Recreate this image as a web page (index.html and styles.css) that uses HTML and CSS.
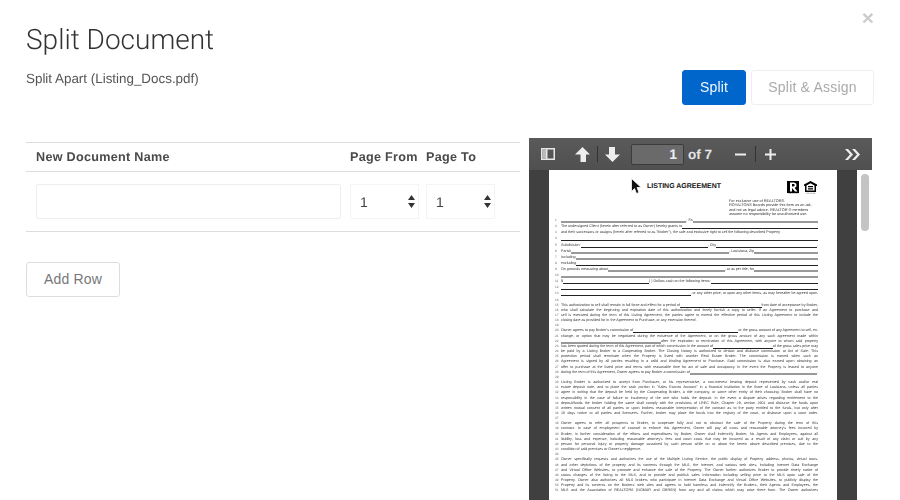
FILE: index.html
```html
<!DOCTYPE html>
<html lang="en">
<head>
<meta charset="utf-8">
<title>Split Document</title>
<link rel="stylesheet" href="styles.css">
</head>
<body>
<main class="modal">
  <button class="close" type="button">×</button>
  <header class="top">
    <div class="heading">
      <h1>Split Document</h1>
      <p>Split Apart (Listing_Docs.pdf)</p>
    </div>
    <div class="actions">
      <button class="btn primary" type="button">Split</button>
      <button class="btn ghost" type="button">Split &amp; Assign</button>
    </div>
  </header>
  <section class="content">
    <div class="form">
      <table class="rows">
        <thead>
          <tr><th class="c-name">New Document Name</th><th class="c-num">Page From</th><th class="c-to">Page To</th></tr>
        </thead>
        <tbody>
          <tr>
            <td class="c-name"><div class="input"></div></td>
            <td class="c-num"><div class="select">1<svg class="updown" viewBox="0 0 7 13" width="7" height="13"><path d="M3.5 0L7 5H0zM3.5 13L0 8h7z"/></svg></div></td>
            <td class="c-to"><div class="select">1<svg class="updown" viewBox="0 0 7 13" width="7" height="13"><path d="M3.5 0L7 5H0zM3.5 13L0 8h7z"/></svg></div></td>
          </tr>
        </tbody>
      </table>
      <button class="btn add" type="button">Add Row</button>
    </div>
    <div class="viewer">
      <div class="toolbar">
        <svg class="tool t-side" viewBox="0 0 14 12" width="14" height="12"><path fill="#e8e8e8" fill-rule="evenodd" d="M0 0h14v12H0zM1.5 1.5v9H5v-9zM6.5 1.5v9h6v-9z"/><path fill="#bbb" d="M1.5 1.5H5v9H1.5z"/></svg>
        <svg class="tool t-up" viewBox="0 0 15 15" width="15" height="15"><path fill="#eee" d="M7.5 0L15 7.5h-4V15H5.5V7.5H0z"/></svg>
        <span class="sep"></span>
        <svg class="tool t-down" viewBox="0 0 15 15" width="15" height="15"><path fill="#eee" d="M4 0h6v7.5h5L7.5 15 0 7.5h4z"/></svg>
        <div class="pageno">1</div>
        <span class="of">of 7</span>
        <svg class="tool t-minus" viewBox="0 0 11 11" width="11" height="11"><path fill="#eee" d="M0 4.5h11v2H0z"/></svg>
        <span class="sep s2"></span>
        <svg class="tool t-plus" viewBox="0 0 11 11" width="11" height="11"><path fill="#eee" d="M0 4.5h4.5V0h2v4.5H11v2H6.5V11h-2V6.5H0z"/></svg>
        <svg class="tool t-more" viewBox="0 0 15 11" width="15" height="11"><path fill="#eee" d="M0 0h3l5 5.5L3 11H0l5-5.500zM7 0h3l5 5.500L10 11H7l5-5.500z"/></svg>
      </div>
      <div class="stage">
        <div class="gutter"></div>
        <article class="page">
          <div class="doc-head">
            <h2>LISTING AGREEMENT</h2>
            <div class="logos">
              <div class="logo"><svg viewBox="0 0 12 12" width="12" height="12"><path fill-rule="evenodd" d="M0 0h12v12H0zM3 1.500v9h2V7l3 3.500h2.500L7.500 6.800C9 6.300 9.500 5.300 9.500 4.200 9.500 2.500 8.200 1.500 6.500 1.500zM5 3h1.300C7.200 3 7.700 3.500 7.700 4.200S7.200 5.400 6.300 5.400H5z"/></svg><small>REALTOR</small></div>
              <div class="logo"><svg viewBox="0 0 13 12" width="13" height="12"><path fill-rule="evenodd" d="M6.500 0L13 3.500V5h-1v6H1V5H0V3.500zM2.500 4.500v5h8v-5L6.500 2.200zM4 5h5v1.200H4zM4 7.200h5v1.200H4z"/></svg><small>HOUSING</small></div>
            </div>
          </div>
          <div class="note">
            <p>For exclusive use of REALTORS.</p>
            <p>ROYALTONS Boards provide this form as an aid,</p>
            <p>and not as legal advice. REALTOR ® members</p>
            <p>assume no responsibility for unauthorized use.</p>
          </div>
          <div class="formlines">
            <div class="ln"><i>1</i><b class="b gray"></b><span>,&nbsp;Fa</span><b class="b gray"></b></div>
            <div class="ln"><i>2</i><span>The undersigned Client (herein after referred to as Owner) hereby grants to</span><b class="b"></b></div>
            <div class="ln"><i>3</i><span>and their successors or assigns (herein after referred to as "Broker"), the sole and exclusive right to sell the following described Property</span></div>
            <div class="ln"><i>4</i><b class="b"></b></div>
            <div class="ln"><i>5</i><span>Subdivision:</span><b class="b"></b><span>, City</span><b class="b w-city"></b><span>,</span></div>
            <div class="ln"><i>6</i><span>Parish</span><b class="b gray"></b><span>, Louisiana, Zip</span><b class="b gray w-zip"></b></div>
            <div class="ln"><i>7</i><span>Including</span><b class="b gray"></b></div>
            <div class="ln"><i>8</i><span>excluding</span><b class="b"></b></div>
            <div class="ln"><i>9</i><span>On grounds measuring about</span><b class="b gray"></b><span>, or as per title, for</span><b class="b gray w-zip"></b></div>
            <div class="ln"><i>10</i><b class="b gray"></b></div>
            <div class="ln"><i>11</i><span>$</span><b class="b w-cash"></b><span>( ) Dollars cash on the following items:</span><b class="b"></b></div>
            <div class="ln"><i>12</i><b class="b"></b></div>
            <div class="ln"><i>13</i><b class="b"></b><span>, or any other price, or upon any other items, as may hereafter be agreed upon.</span></div>
            <div class="ln"><i>14</i></div>
          </div>
          <div class="para">
            <div class="tl"><i>15</i><span>This authorization to sell shall remain in full force and effect for a period of</span><b class="b"></b><span>from date of acceptance by Broker,</span></div>
            <div class="tl"><i>16</i><span>who shall calculate the beginning and expiration date of this authorization and timely furnish a copy to seller. If an Agreement to purchase and</span></div>
            <div class="tl"><i>17</i><span>sell is executed during the term of this Listing Agreement, the parties agree to extend the effective period of this Listing Agreement to include the</span></div>
            <div class="tl short"><i>18</i><span>closing date as provided for in the Agreement to Purchase, or any extension thereof.</span></div>
            <div class="tl"><i>19</i></div>
            <div class="tl"><i>20</i><span>Owner agrees to pay Broker's commission of</span><b class="b"></b><span>or the gross amount of any Agreement to sell, ex-</span></div>
            <div class="tl"><i>21</i><span>change, or option that may be negotiated during the existence of the Agreement, or on the gross amount of any such agreement made within</span></div>
            <div class="tl"><i>22</i><b class="b gray"></b><span>after the expiration or termination of this Agreement, with anyone to whom said property</span></div>
            <div class="tl"><i>23</i><span>has been quoted during the term of this Agreement, part of which commission in the amount of</span><b class="b"></b><span>of the gross sales price may</span></div>
            <div class="tl"><i>24</i><span>be paid by a Listing Broker to a Cooperating Broker. The Closing Notary is authorized to deduct and disburse commission at Act of Sale. This</span></div>
            <div class="tl"><i>25</i><span>protection period shall terminate when the Property is listed with another Real Estate Broker. The commission is earned when such an</span></div>
            <div class="tl"><i>26</i><span>Agreement is signed by all parties resulting in a valid and binding Agreement to Purchase. Said commission is also earned upon obtaining an</span></div>
            <div class="tl"><i>27</i><span>offer to purchase at the listed price and terms with reasonable time for act of sale and occupancy. In the event the Property is leased to anyone</span></div>
            <div class="tl"><i>28</i><span>during the term of this Agreement, Owner agrees to pay Broker a commission of</span><b class="b gray"></b><span>.</span></div>
            <div class="tl"><i>29</i></div>
            <div class="tl"><i>30</i><span>Listing Broker is authorized to accept from Purchaser, or his representative, a non-interest bearing deposit represented by cash and/or real</span></div>
            <div class="tl"><i>31</i><span>estate deposit note, and to place the cash portion in "Sales Escrow Account" in a financial institution in the State of Louisiana, unless all parties</span></div>
            <div class="tl"><i>32</i><span>agree in writing that the deposit be held by the Cooperating Broker, a title company, or some other entity of their choosing. Broker shall have no</span></div>
            <div class="tl"><i>33</i><span>responsibility in the case of failure or insolvency of the one who holds the deposit. In the event a dispute arises regarding entitlement to the</span></div>
            <div class="tl"><i>34</i><span>deposit/funds the broker holding the same shall comply with the provisions of LREC Rule, Chapter 29, section 2901 and disburse the funds upon</span></div>
            <div class="tl"><i>35</i><span>written mutual consent of all parties or upon brokers reasonable interpretation of the contract as to the party entitled to the funds, but only after</span></div>
            <div class="tl"><i>36</i><span>10 days notice to all parties and licensees. Further, broker may place the funds into the registry of the court, or disburse upon a court order.</span></div>
            <div class="tl"><i>37</i></div>
            <div class="tl"><i>38</i><span>Owner agrees to refer all prospects to Broker, to cooperate fully and not to obstruct the sale of the Property during the term of this</span></div>
            <div class="tl"><i>39</i><span>contract. In case of employment of counsel to enforce this Agreement, Owner will pay all costs and reasonable attorney's fees incurred by</span></div>
            <div class="tl"><i>40</i><span>Broker, in further consideration of the efforts and expenditures by Broker, Owner shall indemnify Broker, his Agents and Employees, against all</span></div>
            <div class="tl"><i>41</i><span>liability, loss and expense, including reasonable attorney's fees and court costs that may be incurred as a result of any claim or suit by any</span></div>
            <div class="tl"><i>42</i><span>person for personal injury or property damage sustained by such person while on or about the herein above described premises, due to the</span></div>
            <div class="tl short"><i>43</i><span>condition of said premises or Owner's negligence.</span></div>
            <div class="tl"><i>44</i></div>
            <div class="tl"><i>45</i><span>Owner specifically requests and authorizes the use of the Multiple Listing Service, the public display of Property address, photos, virtual tours,</span></div>
            <div class="tl"><i>46</i><span>and other depictions of the property and its contents through the MLS, the Internet, and various web sites, including Internet Data Exchange</span></div>
            <div class="tl"><i>47</i><span>and Virtual Office Websites, to promote and enhance the sale of the Property. The Owner further authorizes Broker to provide timely notice of</span></div>
            <div class="tl"><i>48</i><span>status changes of the listing to the MLS, and to provide and publish sales information including selling price to the MLS upon sale of the</span></div>
            <div class="tl"><i>49</i><span>Property. Owner also authorizes all MLS brokers who participate in Internet Data Exchange and Virtual Office Websites, to publicly display the</span></div>
            <div class="tl"><i>50</i><span>Property and its contents on the Brokers' web sites and agrees to hold harmless and indemnify the Brokers, their Agents and Employees, the</span></div>
            <div class="tl"><i>51</i><span>MLS and the Association of REALTORS (NOMAR and GBRSN) from any and all claims which may arise there from. The Owner authorizes</span></div>
          </div>
          <svg class="cursor" viewBox="0 0 11 17" width="11" height="17"><path fill="#111" stroke="#fff" stroke-width=".8" d="M.5.500v13l3-3 2 5 2.500-1-2-5h4.200z"/></svg>
        </article>
        <div class="gutter"></div>
        <div class="scroll"><div class="thumb"></div></div>
      </div>
    </div>
  </section>
</main>
</body>
</html>
```

FILE: styles.css
```css
* { box-sizing: border-box; }
html, body { margin: 0; height: 100%; background: #fff; overflow: hidden; }
body { font-family: "Liberation Sans", Arial, sans-serif; color: #555; text-rendering: geometricPrecision; }

.modal { position: relative; height: 500px; padding: 0 26px; overflow: hidden; opacity: .999; }
.close { position: absolute; top: 7px; right: 26px; padding: 0; border: 0; background: none; font: bold 21px/21px "Liberation Sans", sans-serif; color: #ccc; }

.top { display: flex; justify-content: space-between; height: 138px; }
.heading h1 { margin: 23px 0 0; font: 300 28px/34px Roboto, "Liberation Sans", sans-serif; color: #333; }
.heading p { margin: 13px 0 0; font-size: 13.400px; line-height: 18px; color: #555; }
.actions { display: flex; gap: 5px; margin: 70px 0 0; align-items: flex-start; }

.btn { height: 35px; padding: 0 0 1px; border-radius: 3px; font: 14px "Liberation Sans", sans-serif; letter-spacing: .2px; }
.primary { width: 64px; border: 1px solid #0066cc; background: #0066cc; color: #f4f8fc; }
.ghost { width: 123px; border: 1px solid #eee; background: #fff; color: #aaa; }
.add { width: 94px; margin-top: 30px; border: 1px solid #ddd; background: #fff; color: #777; }

.content { display: flex; gap: 9px; }
.form { width: 494px; padding-top: 4px; }
.rows { width: 494px; border-collapse: collapse; table-layout: fixed; }
.rows th { height: 29px; padding: 0 0 1px 10px; border-top: 1px solid #ddd; border-bottom: 1px solid #ddd; text-align: left; font-size: 12.600px; font-weight: bold; color: #4a4a4a; letter-spacing: .3px; white-space: nowrap; }
.rows td { height: 60px; padding: 0 0 0 10px; border-bottom: 1px solid #ddd; }
.rows .c-name { width: 315px; }
.rows .c-num { width: 76px; padding-left: 9px; }
.rows .c-to { width: 103px; padding-left: 9px; }
.input { width: 305px; height: 35px; border: 1px solid #eee; border-radius: 2px; }
.select { display: flex; align-items: center; justify-content: space-between; width: 69px; height: 35px; padding: 0 3px 0 9px; border: 1px solid #f4f4f4; font-size: 14px; color: #444; }
.updown { fill: #333; }

.viewer { display: flex; flex-direction: column; width: 343px; height: 362px; }
.toolbar { display: flex; align-items: center; height: 32px; flex: none; background: linear-gradient(#5a5a5a, #505050); padding-left: 12px; }
.tool { display: block; flex: none; }
.t-up { margin-left: 20px; }
.sep { flex: none; width: 1px; height: 16px; margin-left: 7px; background: #333; }
.t-down { margin-left: 7px; }
.pageno { flex: none; width: 53px; height: 21px; margin-left: 11px; padding-right: 6px; border: 1px solid #3c3c3c; border-radius: 2px; background: #6a6a6a; text-align: right; font: bold 14px/19px "Liberation Sans", sans-serif; color: #eee; }
.of { flex: none; width: 47px; margin-left: 4px; font: bold 13.500px "Liberation Sans", sans-serif; color: #e6e6e6; }
.t-minus { margin-left: 0; }
.s2 { margin-left: 9px; }
.t-plus { margin-left: 9px; }
.t-more { margin-left: 69px; }

.stage { display: flex; flex: 1; min-height: 0; }
.gutter { flex: none; width: 20px; background: #404040; }
.page { position: relative; flex: none; width: 288px; padding: 0 20px 0 6px; background: #fff; overflow: hidden; color: #333; font-size: 3.650px; }
.scroll { flex: none; width: 15px; padding: 4px 4px 0; background: #fff; }
.thumb { width: 8px; height: 57px; border-radius: 4px; background: #c4c4c4; }

.doc-head { display: flex; align-items: flex-start; height: 29px; padding-top: 11px; }
.doc-head h2 { flex: none; width: 146px; margin: 2px 0 0 92px; font: bold 7px/8px "Liberation Sans", sans-serif; color: #111; white-space: nowrap; }
.logos { display: flex; gap: 5px; margin-left: -6px; color: #222; }
.logo { display: flex; flex-direction: column; align-items: center; }
.logo svg { display: block; }
.logo small { font-size: 2px; line-height: 3px; color: #555; }
.note { height: 18px; margin-left: 174px; font-size: 3.800px; line-height: 4.300px; color: #333; filter: blur(.3px); }
.note p { margin: 0; white-space: nowrap; }

.formlines, .para { filter: blur(.3px); }
.ln, .tl { display: flex; align-items: flex-end; width: 263px; white-space: nowrap; }
.ln { height: 6.120px; line-height: 6px; }
.tl { height: 5.170px; line-height: 5px; }
i { flex: none; width: 5px; margin-right: 1px; font-style: normal; font-size: 3.200px; color: #666; }
.ln span, .tl span { flex: none; }
.tl span:only-of-type { flex: 1; text-align: justify; text-align-last: justify; overflow: hidden; }
.tl.short span { text-align-last: left; }
.b { flex: 1; min-width: 0; height: 4px; border-bottom: 1px solid #222; }
.b.gray { border-bottom: 2px solid #999; }
.w-city { flex: 0 0 101px; }
.w-zip { flex: 0 0 64px; }
.w-cash { flex: 0 0 86px; }
.tl:nth-child(8) .b { flex: 0 0 100px; }
.cursor { position: absolute; left: 82px; top: 8px; }
```
